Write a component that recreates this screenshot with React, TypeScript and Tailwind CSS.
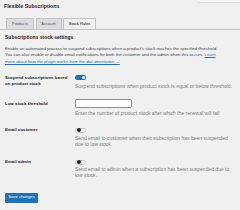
import React from "react";

function Toggle({ on }: { on: boolean }) {
  return on ? (
    <div className="w-[11px] h-[5px] rounded-full bg-[#2271b1] flex items-center justify-end pr-[1px]">
      <div className="w-[3px] h-[3px] rounded-full bg-white" />
    </div>
  ) : (
    <div className="w-[11px] h-[5px] rounded-full bg-white border-[0.5px] border-[#c3c4c7] flex items-center pl-[0.5px]">
      <div className="w-[4px] h-[4px] rounded-full bg-[#1d2327]" />
    </div>
  );
}

export default function App() {
  return (
    <div
      className="relative w-[240px] h-[210px] bg-[#f0f0f1] overflow-hidden flex flex-col"
      style={{ fontFamily: '"Liberation Sans", Arial, sans-serif' }}
    >
      <div className="absolute top-0 right-0 w-[42px] h-[2px] bg-[#f6f7f7] shadow-[0_0.5px_1px_rgba(0,0,0,0.15)]" />
      <div className="pl-[4px] pt-[3px] text-[5.2px] leading-[6px] font-semibold text-[#1d2327] whitespace-nowrap">
        Flexible Subscriptions
      </div>
      <div className="mt-[9px] flex items-end gap-[1.5px] pl-[6px] border-b-[0.5px] border-[#c3c4c7] h-[11.5px]">
        <div className="h-[11px] w-[28px] flex items-center justify-center bg-[#dcdcde] border-[0.5px] border-b-0 border-[#c3c4c7] text-[4px] text-[#50575e]">
          Products
        </div>
        <div className="h-[11px] w-[26px] flex items-center justify-center bg-[#dcdcde] border-[0.5px] border-b-0 border-[#c3c4c7] text-[4px] text-[#50575e]">
          Account
        </div>
        <div className="h-[11.5px] w-[33px] -mb-[0.5px] flex items-center justify-center bg-[#f0f0f1] border-[0.5px] border-b-0 border-[#c3c4c7] text-[4px] text-[#000]">
          Stock Rules
        </div>
      </div>
      <div className="mt-[4px] pl-[5px] text-[5px] leading-[7px] font-semibold text-[#1d2327] whitespace-nowrap">
        Subscriptions stock settings
      </div>
      <div className="mt-[5px] pl-[5px] text-[4.3px] leading-[6.5px] text-[#3c434a] whitespace-nowrap">
        <div>
          Enable an automated process to suspend subscriptions when a product's stock reaches the specified threshold.
        </div>
        <div>
          You can also enable or disable email notifications for both the customer and the admin when this occurs.{" "}
          <span className="text-[#2271b1] underline">Learn</span>
        </div>
        <div>
          <span className="text-[#2271b1] underline">more about how the plugin works from the documentation →</span>
        </div>
      </div>

      <div className="mt-[9.5px] flex">
        <div className="w-[75px] pl-[5px] pr-[4px] text-[4.4px] leading-[6px] font-semibold text-[#1d2327] whitespace-nowrap">
          <div>Suspend subscriptions based</div>
          <div>on product stock</div>
        </div>
        <div className="flex flex-col">
          <Toggle on={true} />
          <div className="mt-[3px] text-[5px] leading-[6px] text-[#787c82] whitespace-nowrap">
            Suspend subscriptions when product stock is equal or below threshold.
          </div>
        </div>
      </div>

      <div className="mt-[10px] flex">
        <div className="w-[75px] pl-[5px] pt-[2px] text-[4.4px] leading-[6px] font-semibold text-[#1d2327] whitespace-nowrap">
          Low stock threshold
        </div>
        <div className="flex flex-col">
          <div className="w-[57px] h-[9px] bg-white border-[0.5px] border-[#8c8f94] rounded-[1px]" />
          <div className="mt-[2px] text-[5px] leading-[6px] text-[#787c82] whitespace-nowrap">
            Enter the number of product stock after which the renewal will fail
          </div>
        </div>
      </div>

      <div className="mt-[11px] flex">
        <div className="w-[75px] pl-[5px] text-[4.4px] leading-[6px] font-semibold text-[#1d2327] whitespace-nowrap">
          Email customer
        </div>
        <div className="flex flex-col">
          <div className="mt-[1px]">
            <Toggle on={false} />
          </div>
          <div className="mt-[2px] text-[5px] leading-[6px] text-[#787c82] whitespace-nowrap">
            <div>Send email to customer when their subscription has been suspended</div>
            <div>due to low stock.</div>
          </div>
        </div>
      </div>

      <div className="mt-[12px] flex">
        <div className="w-[75px] pl-[5px] text-[4.4px] leading-[6px] font-semibold text-[#1d2327] whitespace-nowrap">
          Email admin
        </div>
        <div className="flex flex-col">
          <div className="mt-[1px]">
            <Toggle on={false} />
          </div>
          <div className="mt-[1px] text-[5px] leading-[6px] text-[#787c82] whitespace-nowrap">
            <div>Send email to admin when a subscription has been suspended due to</div>
            <div>low stock.</div>
          </div>
        </div>
      </div>

      <div className="mt-[15px] pl-[5px]">
        <div className="w-[33px] h-[10px] bg-[#2271b1] rounded-[1px] flex items-center justify-center text-[4.2px] text-white whitespace-nowrap">
          Save changes
        </div>
      </div>
    </div>
  );
}
